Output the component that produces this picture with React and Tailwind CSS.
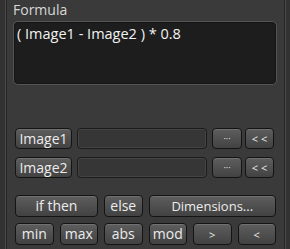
import React from "react";

const font = { fontFamily: '"Open Sans", "Noto Sans", sans-serif' };

function Btn({ children, className = "" }) {
  return (
    <div
      className={
        "flex items-center justify-center rounded-[4px] border border-[#141414] bg-gradient-to-b from-[#5e5e5e] to-[#424242] shadow-[inset_0_1px_0_rgba(255,255,255,0.12)] leading-none text-[#ececec] " +
        className
      }
    >
      {children}
    </div>
  );
}

function Field() {
  return (
    <div className="w-[130px] h-full rounded-[4px] border border-[#1c1c1c] bg-[#363636] shadow-[inset_0_0_0_1px_#444444]" />
  );
}

export default function App() {
  return (
    <div
      className="w-[290px] h-[249px] bg-[#323232] pl-[5px] pr-[4px] overflow-hidden"
      style={font}
    >
      <div className="h-full bg-[#3a3a3a] border-l border-r border-[#4a4a4a] shadow-[inset_1px_0_0_#262626,inset_-1px_0_0_#262626] pl-[7px] pr-[8px] pt-[2px] flex flex-col">
        <div className="h-[16px] leading-[16px] text-[14px] text-[#d8d8d8]">Formula</div>
        <div className="mt-[3px] h-[64px] rounded-[5px] border border-[#555555] bg-[#1d1d1d] shadow-[inset_0_0_0_1px_#141414] px-[3px] pt-[2px] text-[14.5px] leading-[19px] text-[#f2f2f2]">
          ( Image1 - Image2 ) * 0.8
        </div>

        <div className="mt-[43px] ml-[2px] flex h-[21px]">
          <Btn className="w-[57px] text-[14px]">Image1</Btn>
          <div className="ml-[5px] h-full"><Field /></div>
          <Btn className="ml-[5px] w-[30px] text-[9px]">···</Btn>
          <Btn className="ml-[3px] w-[29px] text-[11px]">&lt; &lt;</Btn>
        </div>
        <div className="mt-[8px] ml-[2px] flex h-[21px]">
          <Btn className="w-[57px] text-[14px]">Image2</Btn>
          <div className="ml-[5px] h-full"><Field /></div>
          <Btn className="ml-[5px] w-[30px] text-[9px]">···</Btn>
          <Btn className="ml-[3px] w-[29px] text-[11px]">&lt; &lt;</Btn>
        </div>

        <div className="mt-[17px] ml-[2px] w-[261px] grid grid-cols-6 gap-x-[6px] gap-y-[6px]">
          <Btn className="col-span-2 h-[22px] text-[14px]">if then</Btn>
          <Btn className="h-[22px] text-[14px]">else</Btn>
          <Btn className="col-span-3 h-[22px] text-[13px]">Dimensions...</Btn>
          <Btn className="h-[22px] text-[14px]">min</Btn>
          <Btn className="h-[22px] text-[14px]">max</Btn>
          <Btn className="h-[22px] text-[14px]">abs</Btn>
          <Btn className="h-[22px] text-[14px]">mod</Btn>
          <Btn className="h-[22px] text-[11px]">&gt;</Btn>
          <Btn className="h-[22px] text-[11px]">&lt;</Btn>
        </div>
      </div>
    </div>
  );
}
